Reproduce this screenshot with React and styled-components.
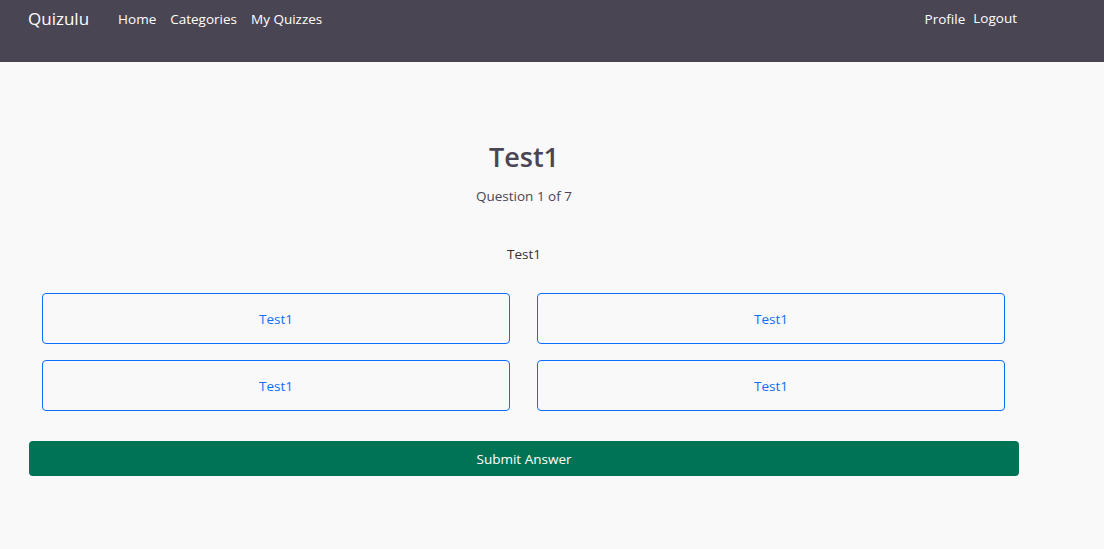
import styled, { createGlobalStyle } from 'styled-components'

const GlobalStyle = createGlobalStyle`
  body {
    margin: 0;
    background: #f9f9f9;
    font-family: "Open Sans", "Noto Sans", sans-serif;
  }
`

const answers = ['Test1', 'Test1', 'Test1', 'Test1']

const App = () => {
  return (
    <>
      <GlobalStyle />
      <NavBar>
        <NavLeft>
          <Brand>Quizulu</Brand>
          <NavLinks>
            <NavLink>Home</NavLink>
            <NavLink>Categories</NavLink>
            <NavLink>My Quizzes</NavLink>
          </NavLinks>
        </NavLeft>
        <NavRight>
          <NavLink>Profile</NavLink>
          <NavLink $up>Logout</NavLink>
        </NavRight>
      </NavBar>
      <Main>
        <Title>Test1</Title>
        <Progress>Question 1 of 7</Progress>
        <QuestionText>Test1</QuestionText>
        <AnswerGrid>
          {answers.map((a, i) => <AnswerButton key={i}>{a}</AnswerButton>)}
        </AnswerGrid>
        <SubmitButton>Submit Answer</SubmitButton>
      </Main>
    </>
  )
}

const NavBar = styled.nav`
  height: 62px;
  background: #4a4553;
  display: flex;
  justify-content: space-between;
  align-items: flex-start;
  padding: 8px 87px 0 28px;
  box-sizing: border-box;
`

const NavLeft = styled.div`
  display: flex;
  align-items: center;
`

const Brand = styled.div`
  color: #ffffff;
  font-size: 17px;
  line-height: 22px;
  margin-right: 29px;
`

const NavLinks = styled.div`
  display: flex;
  gap: 14px;
`

const NavLink = styled.div`
  color: #ffffff;
  font-size: 13.5px;
  line-height: 22px;
  position: relative;
  top: ${props => props.$up ? '-1px' : '0'};
`

const NavRight = styled.div`
  display: flex;
  gap: 8px;
`

const Main = styled.main`
  width: 990px;
  margin-left: 29px;
  padding-top: 76px;
  display: flex;
  flex-direction: column;
  align-items: center;
`

const Title = styled.h1`
  margin: 0;
  color: #4a4553;
  font-size: 27px;
  font-weight: 600;
  line-height: 38px;
`

const Progress = styled.p`
  margin: 10px 0 0;
  color: #4a4553;
  font-size: 13.5px;
  line-height: 20px;
`

const QuestionText = styled.p`
  margin: 38px 0 0;
  color: #333333;
  font-size: 13.5px;
  line-height: 20px;
`

const AnswerGrid = styled.div`
  margin-top: 29px;
  width: 963px;
  display: grid;
  grid-template-columns: 1fr 1fr;
  column-gap: 27px;
  row-gap: 16px;
  margin-left: 13px;
  align-self: flex-start;
`

const AnswerButton = styled.button`
  height: 51px;
  background: transparent;
  border: 1px solid #0d6efd;
  border-radius: 4px;
  color: #0d6efd;
  font-family: inherit;
  font-size: 13.5px;
`

const SubmitButton = styled.button`
  margin-top: 30px;
  width: 100%;
  height: 35px;
  background: #007355;
  border: none;
  border-radius: 4px;
  color: #ffffff;
  font-family: inherit;
  font-size: 13.5px;
`

export default App
